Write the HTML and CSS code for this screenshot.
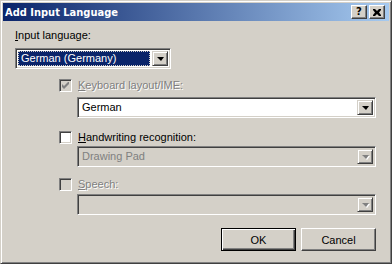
FILE: index.html
```html
<!DOCTYPE html>
<html lang="en">
<head>
    <meta charset="UTF-8">
    <title>Add Input Language</title>
    <link rel="stylesheet" href="styles.css">
</head>
<body>
    <div class="window">
        <div class="titlebar">
            <span class="title">Add Input Language</span>
            <div class="caption-btns">
                <div class="cap-btn help">?</div>
                <div class="cap-btn close">
                    <svg width="8" height="7" viewBox="0 0 8 7"><path d="M0 0h2l2 2 2-2h2v1l-2 2.5 2 2.5v1h-2l-2-2-2 2h-2v-1l2-2.5-2-2.5z" fill="#000"/></svg>
                </div>
            </div>
        </div>

        <div class="content">
            <div class="label"><u>I</u>nput language:</div>
            <div class="combo focused lang">
                <div class="combo-text"><span class="focus-rect">German (Germany)</span></div>
                <div class="drop-btn"><span class="arrow"></span></div>
            </div>

            <div class="option first">
                <div class="check disabled">
                    <svg width="7" height="7" viewBox="0 0 7 7"><path d="M0 2v3l2 2 5-5v-3l-5 5z" fill="#808080"/></svg>
                </div>
                <span class="opt-label disabled"><u>K</u>eyboard layout/IME:</span>
            </div>
            <div class="combo wide">
                <div class="combo-text">German</div>
                <div class="drop-btn"><span class="arrow"></span></div>
            </div>

            <div class="option second">
                <div class="check"></div>
                <span class="opt-label"><u>H</u>andwriting recognition:</span>
            </div>
            <div class="combo wide disabled">
                <div class="combo-text">Drawing Pad</div>
                <div class="drop-btn"><span class="arrow"></span></div>
            </div>

            <div class="option third">
                <div class="check disabled"></div>
                <span class="opt-label disabled"><u>S</u>peech:</span>
            </div>
            <div class="combo wide disabled">
                <div class="combo-text"></div>
                <div class="drop-btn"><span class="arrow"></span></div>
            </div>

            <div class="buttons">
                <div class="btn default">OK</div>
                <div class="btn">Cancel</div>
            </div>
        </div>
    </div>
</body>
</html>
```

FILE: styles.css
```css
body {
    margin: 0;
    font-family: "Liberation Sans", Arial, sans-serif;
    font-size: 11px;
    color: #000;
    background: #d4d0c8;
}
.window {
    width: 392px;
    height: 264px;
    box-sizing: border-box;
    background: #d4d0c8;
    border: 1px solid;
    border-color: #d4d0c8 #404040 #404040 #d4d0c8;
    box-shadow: inset 1px 1px #fff, inset -1px -1px #808080;
    padding: 2px;
    display: flex;
    flex-direction: column;
}
.titlebar {
    height: 18px;
    background: linear-gradient(to right, #0a246a, #a6caf0);
    display: flex;
    align-items: center;
    justify-content: space-between;
    padding: 0 4px 0 2px;
}
.title {
    color: #fff;
    font-family: "DejaVu Sans Condensed", sans-serif;
    font-weight: bold;
    font-size: 11px;
}
.caption-btns {
    display: flex;
    gap: 2px;
}
.cap-btn {
    width: 16px;
    height: 14px;
    box-sizing: border-box;
    background: #d4d0c8;
    border: 1px solid;
    border-color: #fff #404040 #404040 #fff;
    box-shadow: inset -1px -1px #808080;
    display: flex;
    align-items: center;
    justify-content: center;
}
.cap-btn.help {
    font-family: "DejaVu Sans", sans-serif;
    font-weight: bold;
    font-size: 10px;
    line-height: 12px;
}
.content {
    flex: 1;
    padding: 8px 12px 0 12px;
    display: flex;
    flex-direction: column;
}
.label {
    line-height: 13px;
}
.combo {
    height: 21px;
    box-sizing: border-box;
    background: #fff;
    border: 1px solid;
    border-color: #808080 #fff #fff #808080;
    box-shadow: inset 1px 1px #404040, inset -1px -1px #d4d0c8;
    padding: 2px;
    display: flex;
    align-items: stretch;
}
.combo.lang {
    width: 156px;
    margin-top: 6px;
}
.combo.wide {
    width: 299px;
    margin-left: 62px;
}
.combo.disabled {
    background: #d4d0c8;
    color: #808080;
}
.combo-text {
    flex: 1;
    display: flex;
    align-items: center;
    padding-left: 2px;
    line-height: 13px;
}
.combo.focused .combo-text {
    background: #0a246a;
    color: #fff;
    padding: 0;
    margin-right: 2px;
}
.focus-rect {
    flex: 1;
    align-self: stretch;
    display: flex;
    align-items: center;
    padding-left: 2px;
    border: 1px dotted #d4d0c8;
}
.drop-btn {
    width: 16px;
    box-sizing: border-box;
    background: #d4d0c8;
    border: 1px solid;
    border-color: #d4d0c8 #404040 #404040 #d4d0c8;
    box-shadow: inset 1px 1px #fff, inset -1px -1px #808080;
    display: flex;
    align-items: center;
    justify-content: center;
}
.arrow {
    width: 0;
    height: 0;
    border-left: 4px solid transparent;
    border-right: 3px solid transparent;
    border-top: 4px solid #000;
    margin-top: 1px;
}
.combo.disabled .arrow {
    border-top-color: #808080;
    filter: drop-shadow(1px 1px 0 #fff);
}
.option {
    display: flex;
    align-items: center;
    margin-left: 44px;
    height: 13px;
    gap: 6px;
}
.option.first {
    margin-top: 10px;
    margin-bottom: 5px;
}
.option.second {
    margin-top: 13px;
    margin-bottom: 2px;
}
.option.third {
    margin-top: 11px;
    margin-bottom: 3px;
}
.check {
    width: 13px;
    height: 13px;
    box-sizing: border-box;
    background: #fff;
    border: 1px solid;
    border-color: #808080 #fff #fff #808080;
    box-shadow: inset 1px 1px #404040, inset -1px -1px #d4d0c8;
    display: flex;
    align-items: center;
    justify-content: center;
}
.check.disabled {
    background: #d4d0c8;
}
.opt-label {
    line-height: 13px;
}
.opt-label.disabled {
    color: #808080;
    text-shadow: 1px 1px 0 #fff;
}
.buttons {
    display: flex;
    justify-content: flex-end;
    gap: 5px;
    margin-top: 13px;
    padding-right: 1px;
}
.btn {
    width: 75px;
    height: 23px;
    box-sizing: border-box;
    background: #d4d0c8;
    border: 1px solid;
    border-color: #fff #404040 #404040 #fff;
    box-shadow: inset -1px -1px #808080;
    display: flex;
    align-items: center;
    justify-content: center;
}
.btn.default {
    border: 1px solid #000;
    box-shadow: inset 1px 1px #fff, inset -1px -1px #404040, inset -2px -2px #808080;
}
```
